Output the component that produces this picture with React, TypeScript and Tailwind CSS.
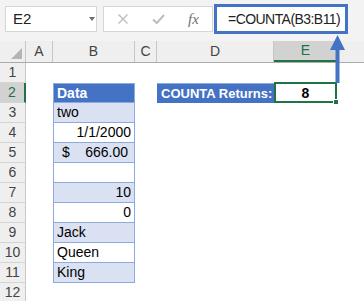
import React from "react";

type Row = {
    n: number;
    kind?: "head" | "cell";
    text?: string;
    align?: "left" | "right";
    money?: boolean;
    shaded?: boolean;
};

const rows: Row[] = [
    { n: 1 },
    { n: 2, kind: "head", text: "Data" },
    { n: 3, kind: "cell", text: "two", shaded: true },
    { n: 4, kind: "cell", text: "1/1/2000", align: "right" },
    { n: 5, kind: "cell", money: true, shaded: true },
    { n: 6, kind: "cell" },
    { n: 7, kind: "cell", text: "10", align: "right", shaded: true },
    { n: 8, kind: "cell", text: "0", align: "right" },
    { n: 9, kind: "cell", text: "Jack", shaded: true },
    { n: 10, kind: "cell", text: "Queen" },
    { n: 11, kind: "cell", text: "King", shaded: true },
    { n: 12 },
];

function DataCell({ row }: { row: Row }) {
    if (!row.kind) return <div className="h-full w-[82px]" />;
    const base =
        "flex h-full w-[82px] items-center border-x border-b border-[#8ea9db] px-[3px]";
    if (row.kind === "head") {
        return (
            <div className={`${base} border-t bg-[#4472c4] font-bold text-white`}>
                {row.text}
            </div>
        );
    }
    const bg = row.shaded ? "bg-[#d9e1f2]" : "bg-white";
    if (row.money) {
        return (
            <div className={`${base} ${bg} justify-between pl-[8px] pr-[6px]`}>
                <span>$</span>
                <span>666.00</span>
            </div>
        );
    }
    return (
        <div
            className={`${base} ${bg} ${row.align === "right" ? "justify-end" : "justify-start"}`}
        >
            {row.text}
        </div>
    );
}

export default function App() {
    return (
        <div className="relative h-[301px] w-[364px] overflow-hidden bg-white font-['Liberation_Sans',Arial,sans-serif] text-[14px] text-black">
            {/* formula bar */}
            <div className="flex h-[41px] items-start bg-[#f3f3f3]">
                <div className="relative ml-[5px] mt-[6px] flex h-[26px] w-[92px] items-center border border-[#d6d6d6] bg-white pl-[7px] text-[15px] text-[#222]">
                    E2
                    <span className="absolute right-[1px] top-[10px] h-0 w-0 border-x-[3px] border-t-[4px] border-x-transparent border-t-[#6d6d6d]" />
                </div>
                <div className="ml-[6px] mt-[6px] flex h-[26px] w-[110px] items-center border border-[#d6d6d6] bg-white">
                    <svg width="12" height="12" viewBox="0 0 12 12" className="ml-[13px]">
                        <path d="M1.5 1.5 L10.5 10.5 M10.5 1.5 L1.5 10.5" stroke="#bdbdbd" strokeWidth="1.4" />
                    </svg>
                    <svg width="13" height="12" viewBox="0 0 13 12" className="ml-[23px]">
                        <path d="M1 6.5 L4.8 10 L12 2" stroke="#bdbdbd" strokeWidth="2" fill="none" />
                    </svg>
                    <span className="ml-[23px] font-['Liberation_Serif',serif] text-[15px] italic text-[#707070]">
                        fx
                    </span>
                </div>
                <div className="ml-px mt-[4px] flex h-[30px] w-[134px] items-center whitespace-nowrap border-[3px] border-[#4472c4] bg-white pl-[11px] text-[14px] tracking-[-0.55px] text-[#222]">
                    =COUNTA(B3:B11)
                </div>
            </div>

            {/* column headers */}
            <div className="flex h-[22px] border-b border-[#ababab] bg-[#efefef] text-[#444]">
                <div className="relative h-full w-[26px] border-r border-[#c6c6c6]">
                    <span className="absolute bottom-[3px] right-[3px] h-0 w-0 border-b-[11px] border-l-[11px] border-b-[#b4b4b4] border-l-transparent" />
                </div>
                <div className="flex w-[27px] items-center justify-center border-r border-[#c6c6c6]">A</div>
                <div className="flex w-[82px] items-center justify-center border-r border-[#c6c6c6]">B</div>
                <div className="flex w-[22px] items-center justify-center border-r border-[#c6c6c6]">C</div>
                <div className="flex w-[117px] items-center justify-center border-r border-[#c6c6c6]">D</div>
                <div className="flex w-[63px] items-center justify-center border-b-2 border-[#217346] bg-[#d2d2d2] text-[#217346]">
                    E
                </div>
                <div className="flex-1 border-l border-[#c6c6c6]" />
            </div>

            {/* rows */}
            {rows.map((row) => (
                <div key={row.n} className="flex h-[20px]">
                    <div
                        className={`flex h-full w-[26px] items-center justify-center border-b border-[#d4d4d4] ${
                            row.n === 2
                                ? "border-r-2 border-r-[#217346] bg-[#d2d2d2] text-[#217346]"
                                : "border-r border-r-[#c6c6c6] bg-[#efefef] text-[#444]"
                        }`}
                    >
                        {row.n}
                    </div>
                    <div className="w-[27px]" />
                    <DataCell row={row} />
                    <div className="w-[22px]" />
                    {row.n === 2 ? (
                        <>
                            <div className="flex h-full w-[117px] items-center overflow-hidden whitespace-nowrap border-t border-[#8ea9db] bg-[#4472c4] pl-[4px] text-[13px] font-bold text-white">
                                COUNTA Returns:
                            </div>
                            <div className="relative flex h-full w-[63px] items-center justify-center font-bold">
                                8
                                <span className="absolute -top-px bottom-0 left-0 right-0 border-2 border-[#217346]" />
                                <span className="absolute -bottom-[2px] -right-[2px] h-[6px] w-[6px] border border-white bg-[#217346]" />
                            </div>
                        </>
                    ) : (
                        <div className="w-[180px]" />
                    )}
                </div>
            ))}

            {/* callout arrow */}
            <svg
                className="absolute left-0 top-0"
                width="364"
                height="301"
                viewBox="0 0 364 301"
            >
                <rect x="335.5" y="48" width="4" height="35" fill="#4472c4" />
                <polygon points="337.5,35 330,50 345,50" fill="#4472c4" />
            </svg>
        </div>
    );
}
